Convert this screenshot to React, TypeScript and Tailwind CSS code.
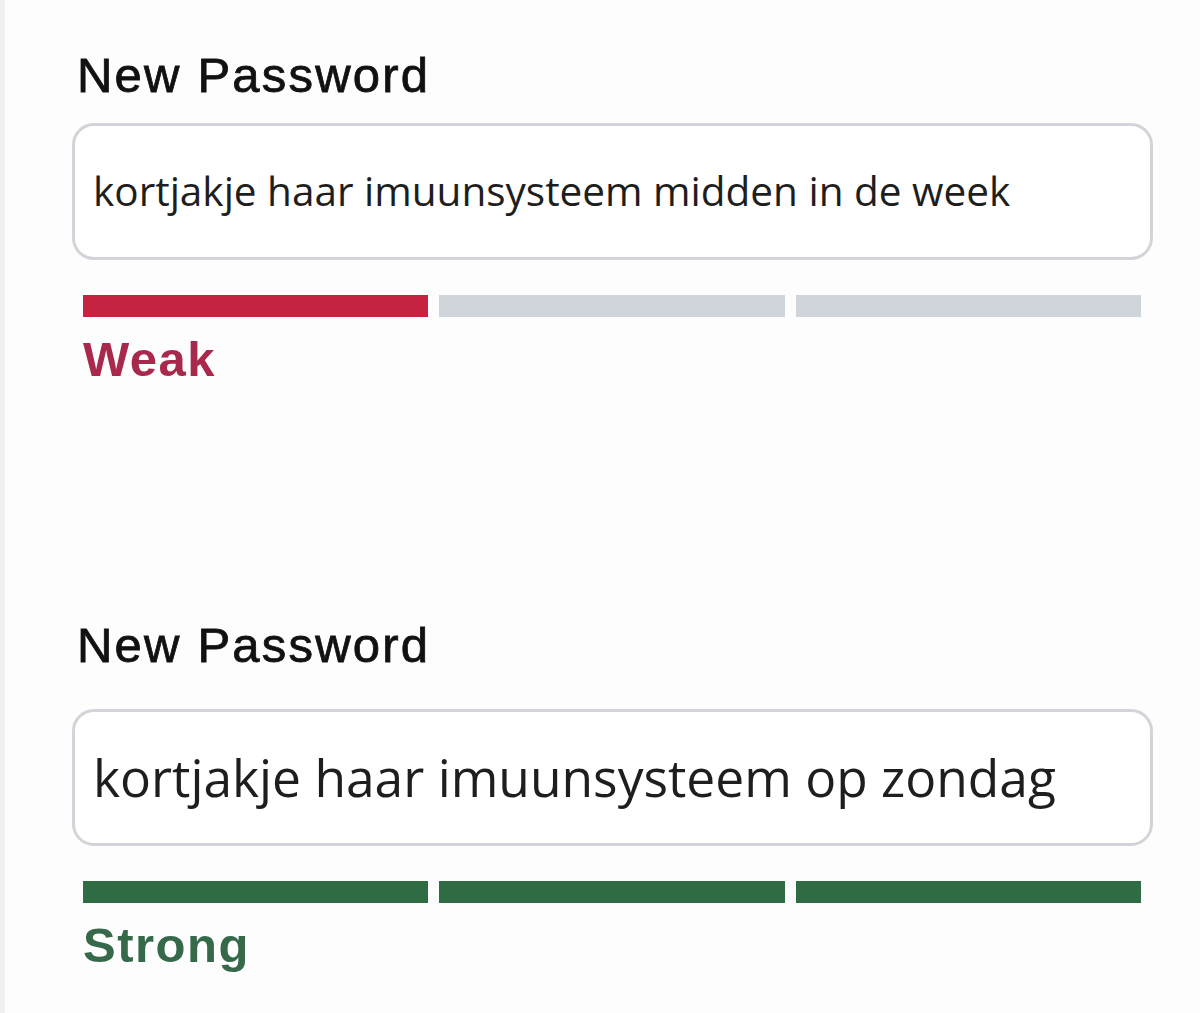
import React from 'react';

interface StrengthFieldProps {
  value: string;
  inputSize: string;
  level: 'weak' | 'strong';
  labelGap: string;
}

const StrengthField: React.FC<StrengthFieldProps> = ({ value, inputSize, level, labelGap }) => {
  const isStrong = level === 'strong';
  const fill = isStrong ? 'bg-[#2f6b43]' : 'bg-[#c4243f]';
  const empty = 'bg-[#d0d5dc]';

  return (
    <div className="flex flex-col">
      <label className="pl-[77px] text-[49px] leading-none tracking-[2.2px] text-[#111111] [-webkit-text-stroke:0.8px_#111111] font-['Liberation_Sans',Arial,sans-serif]">
        New Password
      </label>
      <div
        className={`${labelGap} ml-[72px] w-[1081px] h-[137px] rounded-[22px] border-[3px] border-[#d3d3da] bg-white flex items-center pl-[18px]`}
      >
        <span className={`${inputSize} leading-none text-[#1e1e1e] font-['Open_Sans','Noto_Sans',sans-serif]`}>
          {value}
        </span>
      </div>
      <div className="mt-[35px] ml-[83px] w-[1058px] h-[22px] grid grid-cols-3 gap-[11px]">
        <div className={fill} />
        <div className={isStrong ? fill : empty} />
        <div className={isStrong ? fill : empty} />
      </div>
      <div
        className={`mt-[18px] pl-[83px] text-[49px] leading-none tracking-[1.5px] font-bold font-['Liberation_Sans',Arial,sans-serif] ${
          isStrong ? 'text-[#35694a]' : 'text-[#a8294b]'
        }`}
      >
        {isStrong ? 'Strong' : 'Weak'}
      </div>
    </div>
  );
};

export default function App() {
  return (
    <div className="w-[1200px] h-[1013px] bg-[#fdfdfd] flex overflow-hidden">
      <div className="w-[5px] h-full bg-[#f1f1f1]" />
      <div className="flex-1 -ml-[5px] flex flex-col pt-[51px]">
        <StrengthField
          value="kortjakje haar imuunsysteem midden in de week"
          inputSize="text-[40.5px]"
          level="weak"
          labelGap="mt-[23px]"
        />
        <div className="h-[237px]" />
        <StrengthField
          value="kortjakje haar imuunsysteem op zondag"
          inputSize="text-[51.5px]"
          level="strong"
          labelGap="mt-[39px]"
        />
      </div>
    </div>
  );
}
